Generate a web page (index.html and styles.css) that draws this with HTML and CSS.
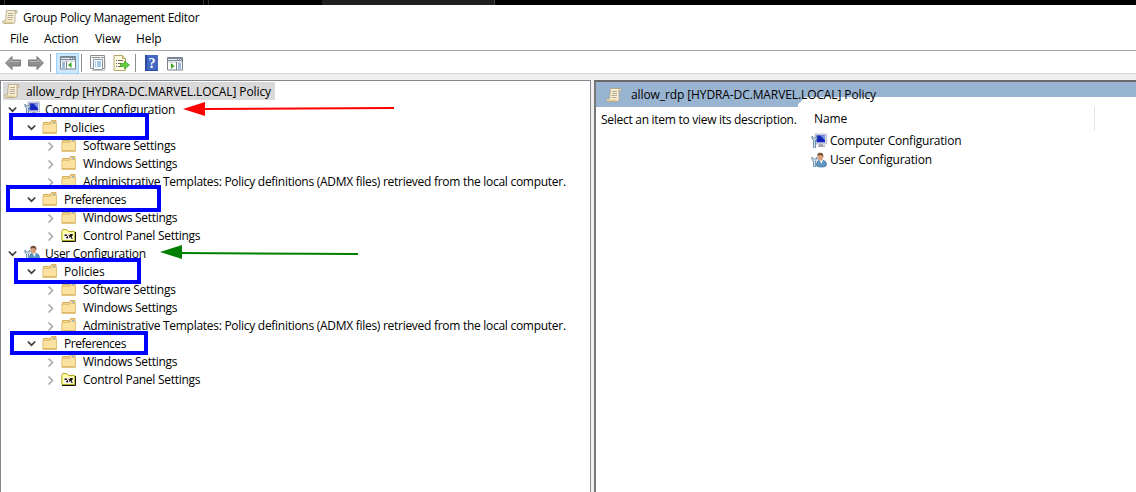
FILE: index.html
```html
<!DOCTYPE html>
<html lang="en">
<head>
<meta charset="utf-8">
<title>Group Policy Management Editor</title>
<link rel="stylesheet" href="styles.css">
</head>
<body>
<svg class="defs" width="0" height="0">
  <symbol id="scroll" viewBox="0 0 16 16">
    <path d="M4.500 1.500h10q1.200.2.500 2.500h-2v8.500q0 2-2 2h-9.500q-1.300-.5-.8-2.500h2.800z" fill="#f8efd4" stroke="#aca284" stroke-width=".8"/>
    <path d="M13 4V2.500q.3-1 1.500-1" fill="none" stroke="#a39b81" stroke-width=".8"/>
    <path d="M6 4.500h5M6 6.500h5M5.500 8.500h5.500M5.500 10.500h5" stroke="#aaa58d" stroke-width=".9"/>
    <path d="M1 12.500h9.500v1.500H2z" fill="#e3cf96"/>
  </symbol>
  <symbol id="folder" viewBox="0 0 16 16">
    <path d="M1.500 13.500V3.500h7l1-2h4.500v12z" fill="#f0d28b" stroke="#d8b05d"/>
    <path d="M9.500 2.500h4v2.500h-4z" fill="#fffdf2" stroke="#d8b05d" stroke-width=".6"/>
    <path d="M11 3.500h2" stroke="#74b2dc"/>
    <path d="M.8 5.500h7.700l1-1h5v9.500H.8z" fill="#fbe2a0" stroke="#e2be6f" stroke-width=".9"/>
    <path d="M.8 14h13.700" stroke="#d1a548"/>
  </symbol>
  <symbol id="control" viewBox="0 0 16 16">
    <path d="M.8 13.500v-9l1-2h4l1.500 2h6.500v9z" fill="#ffffa0" stroke="#b2a629"/>
    <path d="M1 14.500h13.500V5" fill="none" stroke="#111"/>
    <path d="M3 6.500h9v6H3z" fill="#fff"/>
    <path d="M3.500 7.500h2.500v1.500H3.500zM8 8.500 9.500 7h2l.5 1-1.500 2 1.500 2h-1.500l-1-2-1 1zM4.500 11l2-2 1 1.500-1 1z" fill="#111"/>
    <path d="M6.500 8h2" stroke="#b33" stroke-width=".8"/>
  </symbol>
  <symbol id="computer" viewBox="0 0 16 16">
    <path d="M4 1h11.500v10H4z" fill="#d9dce5" stroke="#a6abba" stroke-width=".7"/>
    <path d="M5.500 2.300h8.500v7H5.500z" fill="#1527bc"/><path d="M9 2.300h5v5z" fill="#7892e6"/>
    <path d="M8 11h4v1.500h2V14H7z" fill="#a3a7b1"/>
    <path d="M1 3v3l1.500 1v7.500h2V7L6 5.500V3L4.500 5H2.500z" fill="#d1e2ef" stroke="#547797" stroke-width=".8"/>
  </symbol>
  <symbol id="user" viewBox="0 0 16 16">
    <path d="M5.500 14q-.5-5 3-6h3q4 1 4 4.500 0 2.500-5 2.500-3 0-5-1z" fill="#5e96c4" stroke="#31648f" stroke-width=".7"/>
    <path d="M8.500 8h3.500l-1.500 4z" fill="#eef5f9"/>
    <ellipse cx="9.300" cy="4.900" rx="2.700" ry="3.600" fill="#d8a17c"/>
    <path d="M6.300 4Q6 1 9 .8q4-.2 3.300 4.700L11 3.500 8.500 3z" fill="#76503a"/>
    <path d="M1 5v3l1.500 1v5.500h2V9L6 7.500V5L4.500 7H2.500z" fill="#d5e4ee" stroke="#5c7f9d" stroke-width=".8"/>
  </symbol>
  <symbol id="open" viewBox="0 0 9 9"><path d="M.8 2.500 4.500 6.200 8.200 2.500" fill="none" stroke="#404040" stroke-width="1.700"/></symbol>
  <symbol id="closed" viewBox="0 0 9 9"><path d="m2.500.5 4 4-4 4" fill="none" stroke="#a6a6a6" stroke-width="1.500"/></symbol>
  <symbol id="arrow" viewBox="0 0 16 16"><path d="M.6 8 7 1.500v3.500h8.400v6H7v3.500z" fill="#8f8f8f" stroke="#6f6f6f" stroke-width=".9"/><path d="M2.500 8 6 4.500V6.500h8.500" fill="none" stroke="#b9b9b9"/></symbol>
  <symbol id="window" viewBox="0 0 16 14">
    <path d="M.5.500h15v12.500H.5z" fill="#fff" stroke="#78828d"/>
    <path d="M1 1h14v3H1z" fill="#7e8b98"/><path d="M1 2.500h9M11 2.500h1M13 2.500h1" stroke="#e8eff5"/>
    <path d="M1 5h14" stroke="#bcc5cd"/>
  </symbol>
</svg>

<div class="desktop"><div class="tab"></div><div class="tab2"></div><div class="tab3"></div></div>
<header class="title"><svg class="i16"><use href="#scroll"/></svg><span>Group Policy Management Editor</span></header>
<nav class="menu"><span class="file">File</span><span class="action">Action</span><span class="view">View</span><span>Help</span></nav>
<div class="toolbar">
  <svg class="i16 back"><use href="#arrow"/></svg>
  <svg class="i16 forward"><use href="#arrow"/></svg>
  <i class="sep"></i>
  <div class="pressed"><svg width="16" height="14" viewBox="0 0 16 14"><use href="#window"/><path d="M6.500 5v8" stroke="#78828d"/><path d="M2 7h3M2 9h3M2 11h3" stroke="#3d78b5"/><path d="M11.500 6v6l-3.500-3z" fill="#36aa1f"/></svg></div>
  <i class="sep s2"></i>
  <svg class="props" width="16" height="16" viewBox="0 0 16 16"><path d="M.5.500h14v13H.5z" fill="#f7f7f7" stroke="#8c8c8c"/><path d="M2 2.500h8M11 2.500h3" stroke="#858f98"/><path d="M3.500 4.500h9v10h-9z" fill="#fff" stroke="#8b98a5"/><path d="M5 7h1M7 7h4M5 9h1M7 9h4M5 11h1M7 11h4" stroke="#4e91ca"/><path d="M2 15.500h13V4" fill="none" stroke="#aaa" stroke-width=".7"/></svg>
  <svg class="export" width="17" height="16" viewBox="0 0 17 16"><path d="M1 .5h8.500l3 3v12H1z" fill="#fff9dd" stroke="#b6a66f"/><path d="M9.500.5v3h3" fill="#eddca7" stroke="#b6a66f"/><path d="M3 5.500h1M5 5.500h5M3 8.500h1M5 8.500h3M3 11.500h1M5 11.500h3" stroke="#676b7b"/><path d="M7.500 8.500h4V6l5 4-5 4v-2.500h-4z" fill="#65ca3c" stroke="#37a425" stroke-width=".7"/></svg>
  <i class="sep s3"></i>
  <svg class="help" width="13" height="16" viewBox="0 0 13 16"><path d="M0 0h13v16H0z" fill="#294a9e"/><path d="M2 0h11v15H2z" fill="#4268c2"/><text x="3.500" y="13" class="q">?</text></svg>
  <svg class="last" width="16" height="14" viewBox="0 0 16 14"><use href="#window"/><path d="M9.500 5v8" stroke="#78828d"/><path d="M11 7h3M11 9h3M11 11h3" stroke="#3d78b5"/><path d="M4 6v6l3.500-3z" fill="#36aa1f"/></svg>
</div>
<main class="workspace">
  <section class="tree">
    <div class="root"><svg class="i16"><use href="#scroll"/></svg><span>allow_rdp [HYDRA-DC.MARVEL.LOCAL] Policy</span></div>
    <div class="row l1"><svg class="chev"><use href="#open"/></svg><svg class="i16"><use href="#computer"/></svg><span>Computer Configuration</span></div>
    <div class="row l2"><svg class="chev"><use href="#open"/></svg><svg class="i16"><use href="#folder"/></svg><span class="policies">Policies</span></div>
    <div class="row l3"><svg class="chev"><use href="#closed"/></svg><svg class="i16"><use href="#folder"/></svg><span>Software Settings</span></div>
    <div class="row l3"><svg class="chev"><use href="#closed"/></svg><svg class="i16"><use href="#folder"/></svg><span>Windows Settings</span></div>
    <div class="row l3"><svg class="chev"><use href="#closed"/></svg><svg class="i16"><use href="#folder"/></svg><span>Administrative Templates: Policy definitions (ADMX files) retrieved from the local computer.</span></div>
    <div class="row l2"><svg class="chev"><use href="#open"/></svg><svg class="i16"><use href="#folder"/></svg><span class="prefs">Preferences</span></div>
    <div class="row l3"><svg class="chev"><use href="#closed"/></svg><svg class="i16"><use href="#folder"/></svg><span>Windows Settings</span></div>
    <div class="row l3"><svg class="chev"><use href="#closed"/></svg><svg class="i16"><use href="#control"/></svg><span>Control Panel Settings</span></div>
    <div class="row l1"><svg class="chev"><use href="#open"/></svg><svg class="i16"><use href="#user"/></svg><span>User Configuration</span></div>
    <div class="row l2"><svg class="chev"><use href="#open"/></svg><svg class="i16"><use href="#folder"/></svg><span class="policies">Policies</span></div>
    <div class="row l3"><svg class="chev"><use href="#closed"/></svg><svg class="i16"><use href="#folder"/></svg><span>Software Settings</span></div>
    <div class="row l3"><svg class="chev"><use href="#closed"/></svg><svg class="i16"><use href="#folder"/></svg><span>Windows Settings</span></div>
    <div class="row l3"><svg class="chev"><use href="#closed"/></svg><svg class="i16"><use href="#folder"/></svg><span>Administrative Templates: Policy definitions (ADMX files) retrieved from the local computer.</span></div>
    <div class="row l2"><svg class="chev"><use href="#open"/></svg><svg class="i16"><use href="#folder"/></svg><span class="prefs">Preferences</span></div>
    <div class="row l3"><svg class="chev"><use href="#closed"/></svg><svg class="i16"><use href="#folder"/></svg><span>Windows Settings</span></div>
    <div class="row l3"><svg class="chev"><use href="#closed"/></svg><svg class="i16"><use href="#control"/></svg><span>Control Panel Settings</span></div>
  </section>
  <section class="details">
    <div class="banner"><svg class="i16"><use href="#scroll"/></svg><span>allow_rdp [HYDRA-DC.MARVEL.LOCAL] Policy</span></div>
    <div class="content">
      <div class="description"><svg width="210" height="10" viewBox="0 0 210 10"><path d="M0 0h210q-3 .5-4 3t-4 4v3H0z" fill="#99b4d1"/></svg><p>Select an item to view its description.</p></div>
      <div class="list">
        <div class="colhead"><span>Name</span></div>
        <div class="item"><svg class="i16"><use href="#computer"/></svg><span>Computer Configuration</span></div>
        <div class="item"><svg class="i16"><use href="#user"/></svg><span>User Configuration</span></div>
      </div>
    </div>
  </section>
</main>
<svg class="marks" width="1136" height="492" viewBox="0 0 1136 492">
  <g fill="none" stroke="#0000fe" stroke-width="4"><path d="M11 115h136v23H11zM8 187h151v23H8zM16 260h123v22H16zM12 333h134v20H12z"/></g>
  <path d="M204 109 394 108" stroke="red" stroke-width="2"/><path d="m183 109 22-7v14z" fill="red"/>
  <path d="M180 253 358 254" stroke="green" stroke-width="2"/><path d="m160 252 22-7v14z" fill="green"/>
</svg>
</body>
</html>
```
FILE: styles.css
```css
* { box-sizing: border-box; }
body { margin: 0; width: 1136px; height: 492px; overflow: hidden; display: flex; flex-direction: column; background: #fff; color: #000; font: 12px/18px "Open Sans", "Noto Sans", sans-serif; white-space: nowrap; letter-spacing: -0.28px; }
svg { display: block; flex: none; }
.defs { position: absolute; }
.i16 { width: 16px; height: 16px; }
.desktop { height: 5px; flex: none; background: #000; display: flex; }
.tab { width: 200px; border-left: 1px solid #333; margin-left: 4px; border-right: 1px solid #333; }
.tab2 { width: 117px; margin-left: 4px; margin-right: -3px; border-left: 1px solid #333; border-right: 1px solid #555; }
.tab3 { width: 173px; background: #1e1e1e; border-right: 1px solid #444; }
.title { height: 24px; flex: none; display: flex; align-items: center; gap: 5px; padding-left: 2px; }
.menu { height: 22px; flex: none; display: flex; align-items: center; padding: 0 0 1px 10px; border-bottom: 1px solid #a7a7a7; letter-spacing: -0.1px; }
.file { width: 34px; }
.action { width: 51px; }
.view { width: 41px; }
.toolbar { height: 23px; flex: none; display: flex; align-items: center; padding: 2px 0 0 5px; border-bottom: 1px solid #d7d7d7; }
.forward { margin-left: 7px; transform: scaleX(-1); }
.sep { width: 1px; height: 18px; background: #8d8d8d; margin-left: 6px; }
.pressed { width: 23px; height: 21px; margin-left: 5px; background: #cce8ff; border: 1px solid #99d1ff; display: grid; place-items: center; }
.s2 { margin-left: 2px; }
.props { margin-left: 8px; }
.export { margin-left: 7px; }
.s3 { margin-left: 5px; }
.help { margin-left: 9px; }
.last { margin: 2px 0 0 9px; }
.q { font: bold 14px "Liberation Serif", serif; fill: #fff; }
.workspace { flex: 1; display: flex; padding-top: 6px; background: #f0f0f0; gap: 3px; }
.tree { width: 591px; border: 1px solid #828790; border-bottom: 0; background: #fff; padding-top: 1px; }
.root { width: 272px; height: 18px; background: #d9d9d9; margin-left: 2px; padding-left: 1px; display: flex; align-items: center; gap: 6px; letter-spacing: -0.1px; }
.title span, .root span, .item span { padding-top: 1px; }
.row { height: 18px; display: flex; align-items: center; }
.l1 { padding-left: 7px; }
.l2 { padding-left: 26px; }
.l3 { padding-left: 45px; }
.chev { width: 9px; height: 9px; margin-right: 7px; }
.row span { margin-left: 5px; padding-top: 1px; }
.l2 .chev, .l3 .chev { margin-right: 6px; }
.l2 span, .l3 span { margin-left: 6px; }
.l3 .chev { margin-top: 2px; }
.row .policies { letter-spacing: -0.15px; }
.row .prefs { letter-spacing: -0.45px; }
.details { flex: 1; border-left: 2px solid #777; border-top: 2px solid #696969; background: #fff; }
.banner { height: 15px; background: #99b4d1; display: flex; padding-left: 10px; gap: 9px; letter-spacing: -0.1px; }
.banner .i16 { margin-top: 5px; }
.banner span { margin-top: 4px; }
.banner .i16, .banner span { position: relative; z-index: 1; }
.content { display: flex; }
.description { width: 215px; }
.description p { margin: 4px 0 0 5px; }
.list { padding-top: 10px; }
.colhead { width: 284px; height: 24px; padding: 3px 0 0 3px; border-right: 1px solid #e2e2e2; letter-spacing: -0.1px; }
.item { height: 19px; display: flex; align-items: center; gap: 3px; letter-spacing: -0.22px; }
.marks { position: absolute; left: 0; top: 0; }
```
